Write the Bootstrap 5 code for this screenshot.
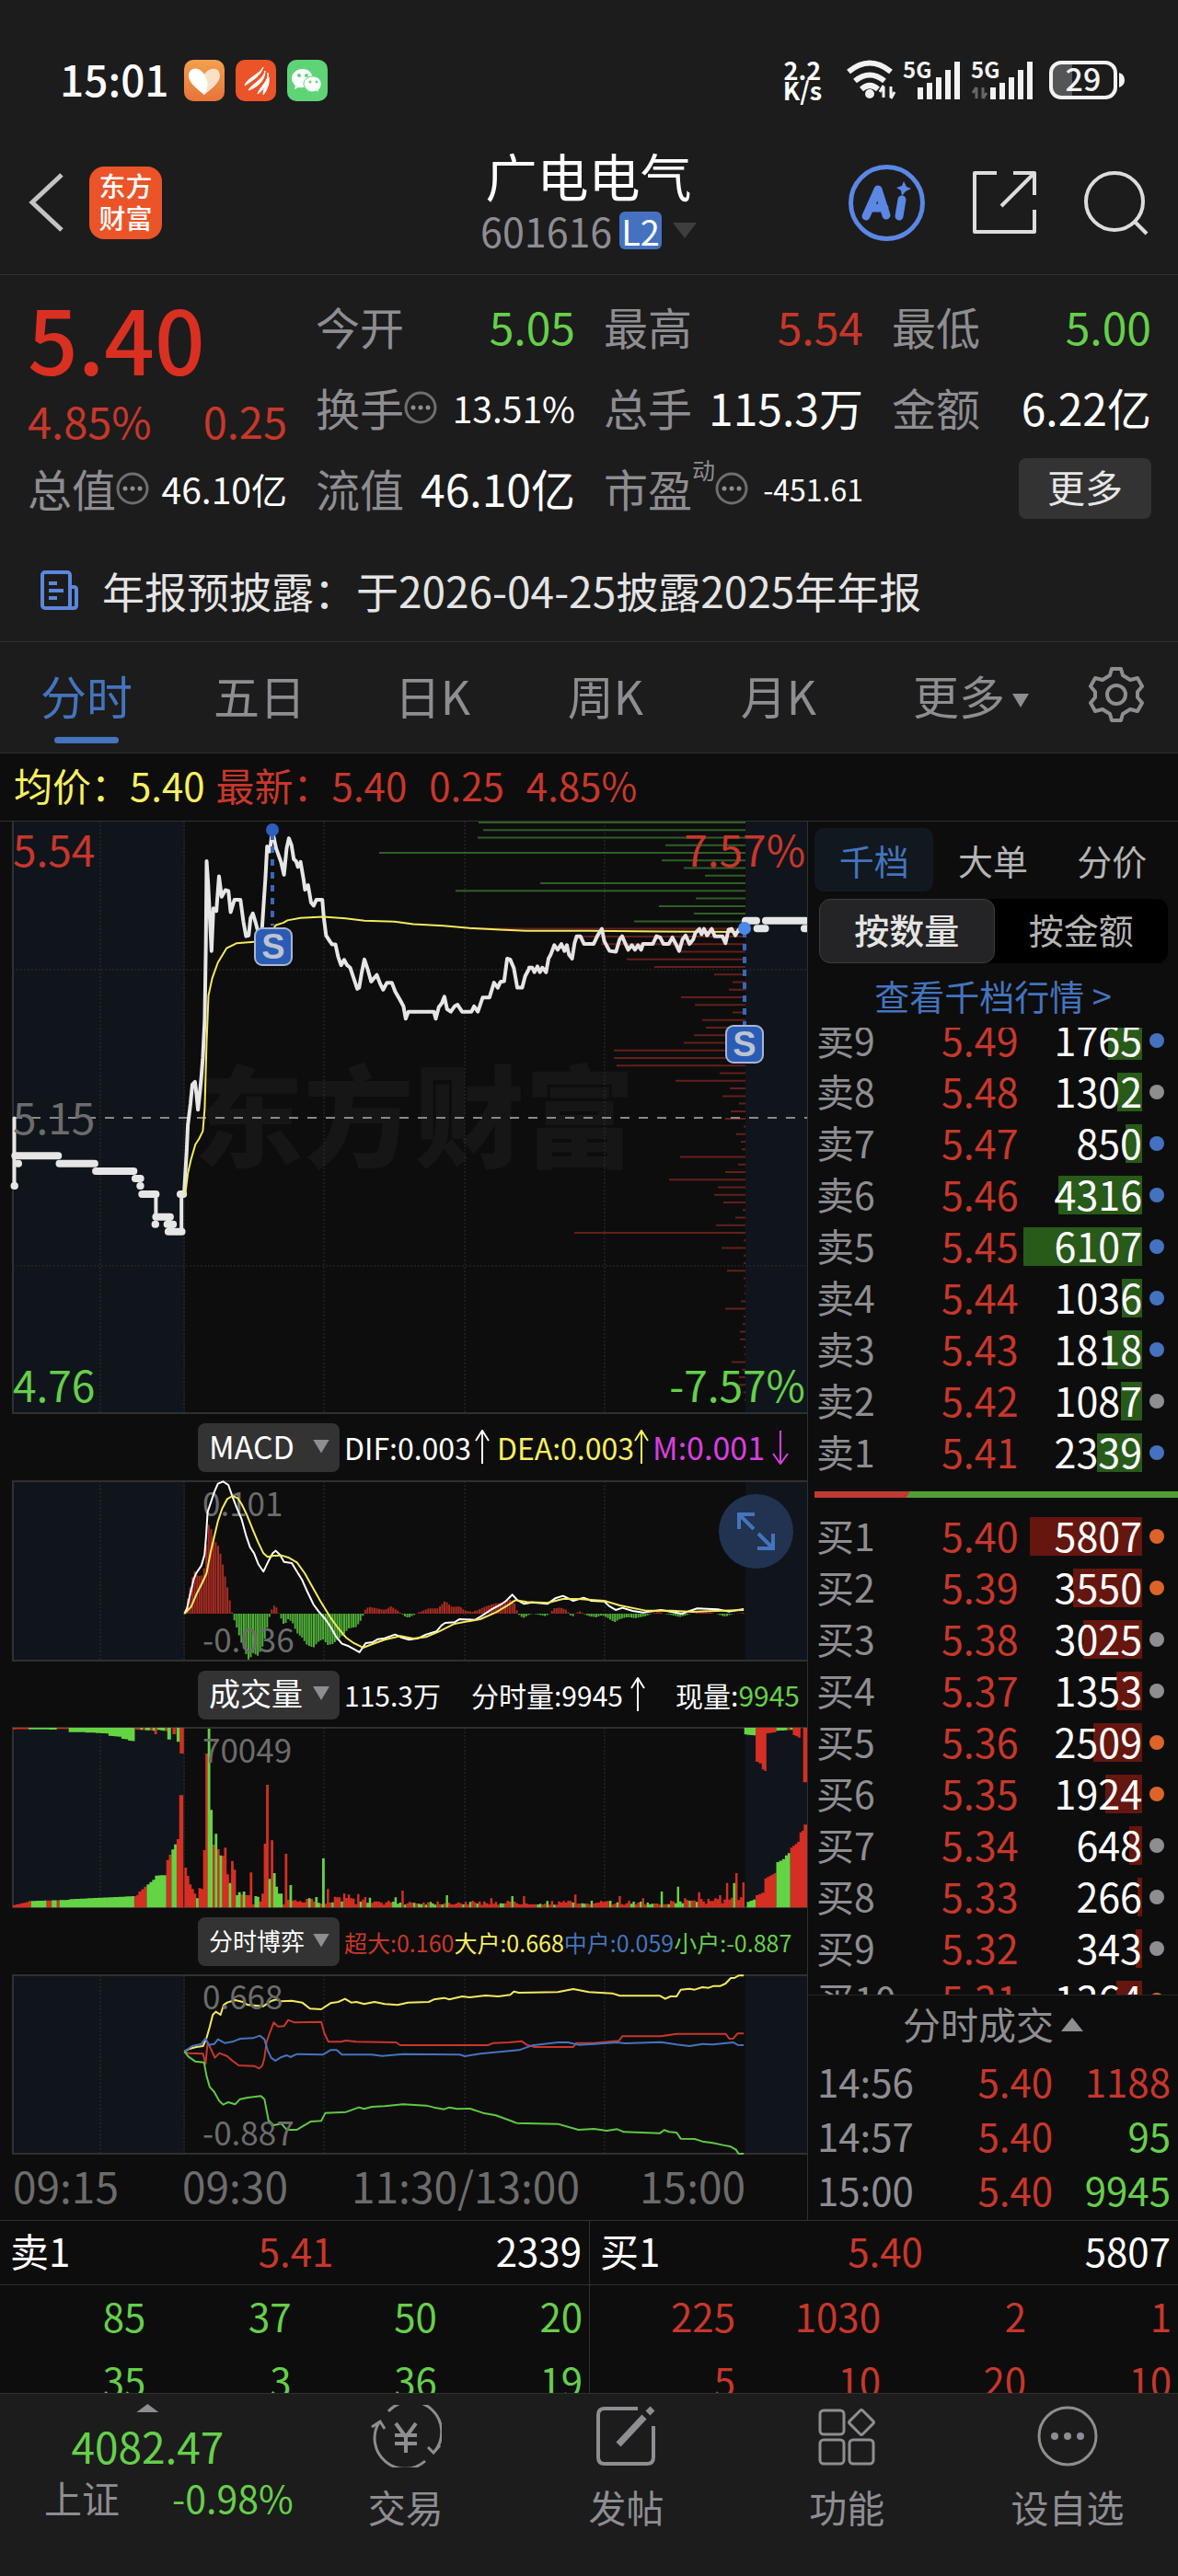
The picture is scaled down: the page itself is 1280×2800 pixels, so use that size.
<!DOCTYPE html>
<html lang="zh-CN" data-bs-theme="dark">
<head>
<meta charset="utf-8">
<meta name="viewport" content="width=device-width, initial-scale=1">
<title>广电电气 601616</title>
<link href="https://cdn.jsdelivr.net/npm/bootstrap@5.3.0/dist/css/bootstrap.min.css" rel="stylesheet">
<style>
:root{--up:#c8372b;--down:#66cf4b;--brand:#4474bd;--dim:#8e8d92;--line:#303030;--panel:#1c1c1c;--ink:#0d0d0d}
body{background:var(--ink);color:#fff;font-family:"Noto Sans CJK SC",sans-serif;font-size:42px;line-height:1.2}
button,a{font:inherit;color:inherit;line-height:inherit}
a{text-decoration:none}
svg{display:block;flex:none}
.up{color:var(--up)}.down{color:var(--down)}.dim{color:var(--dim)}.brand{color:var(--brand)}.gold{color:#f7ef62}.pink{color:#d83fe0}
.bare{background:none;border:0;padding:0}
.surface{background:var(--panel)}
.rule-b{border-bottom:1px solid var(--line)}
.rule-t{border-top:1px solid var(--line)}
.tri{display:inline-block;flex:none;width:18px;height:15px;background:currentColor;clip-path:polygon(0 0,100% 0,50% 100%)}
.tri-up{clip-path:polygon(50% 0,100% 100%,0 100%)}
/* status */
.statusbar{height:142px;padding:32px 58px 0 65px}
.clock{font-size:46px;line-height:50px;font-weight:500;padding-bottom:4px}
.rate{font-size:27px;line-height:22px;font-weight:700;text-align:center}
/* title */
.titlebar{height:157px;padding:0 32px 0 31px;display:grid;grid-template-columns:1fr auto 1fr;align-items:center}
.logo{width:79px;height:79px;border-radius:16px;background:#ea5428;font-size:29px;line-height:35px;font-weight:500;padding-bottom:3px;margin-left:28px;display:flex;align-items:center;text-align:center;justify-content:center}
.stock-name{font-size:56px;line-height:60px;font-weight:400}
.code{font-size:43px;line-height:44px}
.level{background:#4472c0;border-radius:6px;font-size:38px;line-height:41px;padding:0 2px;color:#fff}
.share{margin:0 51px}
/* quote */
.quote{padding:15px 29px 0 30px;display:grid;grid-template-columns:repeat(4,1fr);column-gap:31px}
.cell{height:88px;padding-bottom:6px;display:flex;align-items:center;justify-content:space-between;font-size:48px;white-space:nowrap}
.cell.low{height:80px}
.cell .s{font-size:39px}.cell .xs{font-size:32px}
.big{height:112px;font-size:96px;line-height:106px;font-weight:500;color:#d93022}
.chg{height:68px;padding-bottom:6px;font-size:47px;display:flex;align-items:center;justify-content:space-between}
.sup{font-size:25px;line-height:25px;align-self:flex-start;margin-top:8px}
.more{background:#333;border-radius:8px;font-size:41px;height:66px;width:144px;color:#e6e6e6;margin-left:auto;padding-bottom:4px}
.notice{height:120px;padding:8px 30px 0 44px;font-size:46px;gap:26px;color:#e4e4e4}
/* tabs */
.periods{height:121px;font-size:50px;padding-right:24px;color:var(--dim)}
.periods>*{flex:188 1 0;height:100%;padding-bottom:6px;text-align:center;position:relative}
.periods .wide{flex-grow:230}.periods .gear{flex-grow:86}
.periods .on{color:var(--brand)}
.periods .on::after{content:"";position:absolute;left:50%;bottom:10px;width:70px;height:7px;margin-left:-35px;border-radius:4px;background:var(--brand)}
.infoline{height:74px;padding:0 15px 4px;font-size:42px;white-space:pre}
/* body */
.board{display:grid;grid-template-columns:minmax(0,877fr) minmax(0,403fr)}
.board svg.plot{width:100%;height:auto}
.tools{height:71px;padding-left:215px;font-size:33px;white-space:nowrap;overflow:hidden}
.tools.t30{font-size:30px;height:70px}.tools.t25{font-size:25px}.t32{font-size:32px}.t34{font-size:34px}
.pick{width:154px;height:53px;background:#333;border-radius:8px;padding:0 11px 3px 12px;margin-right:5px;display:flex;align-items:center;justify-content:space-between;flex:none;font-size:34px}
.pick.tight{font-size:26px}
.expand{position:absolute;right:15px;top:15px;width:81px;height:81px;border-radius:50%;background:#213350;display:flex;align-items:center;justify-content:center}
/* book */
.book{border-left:1px solid var(--line)}
.btabs{padding:7px 7px 8px;font-size:38px;color:#b4b4b4}
.btabs button{flex:1;height:69px}
.btabs .on{background:#111820;border-radius:10px;color:var(--brand)}
.seg{margin:0 11px 0 12px;background:#000;border-radius:12px;font-size:38px;height:70px;color:#b4b4b4}
.seg button{flex:1;height:70px;padding-bottom:4px;border-radius:12px}
.seg .on{background:#242426;border:1px solid #3c3c3e;color:#e4e4e4;font-weight:500}
.morelink{height:70px;font-size:38px}
.asks{height:490px;overflow:hidden;display:flex;flex-direction:column;justify-content:flex-end}
.bids{height:526px;overflow:hidden}
.lv{height:56px;flex:none;display:grid;grid-template-columns:136px 1fr 16px;align-items:center;padding:0 15px 0 9px;font-size:43px;line-height:38px}
.lv .nm{font-size:41px;color:var(--dim);white-space:nowrap;padding-bottom:4px}
.lv .qty{position:relative;display:flex;justify-content:space-between;margin-right:8px;padding-bottom:4px}
.lv .qty b{font-weight:400;position:relative}
.lv .bar{position:absolute;right:0;top:0;height:42px;background:#285a1a}
.bids .bar{background:#65160f}
.pip{width:16px;height:16px;border-radius:50%;background:#8e8d92}
.pip.b{background:#4472c0}.pip.o{background:#dc6428}
.ratio{height:7px;margin:14px 7px;background:linear-gradient(120deg,#be3a32 25.5%,#4f9f35 25.5%)}
.trades{height:67px;font-size:41px;padding-bottom:4px;border-top:1px solid #252525}
.tick{height:59px;display:grid;grid-template-columns:1fr 1fr 1fr;align-items:center;padding:0 8px 4px 10px;font-size:42px}
.tick span:nth-child(n+2){text-align:right}
/* queue */
.queue{display:grid;grid-template-columns:1fr 1fr;height:188px;overflow:hidden}
.queue>div+div{border-left:1px solid var(--line)}
.q1{height:70px;display:grid;grid-template-columns:1fr 1fr 1fr;align-items:center;padding:0 8px 4px 11px}
.q2{height:70px;display:grid;grid-template-columns:repeat(4,1fr);align-items:center;text-align:right;padding:0 7px 4px 0}
/* dock */
.dock{height:199px;color:var(--dim);font-size:41px}
.dock>button{flex:240 1 0;padding-top:12px;display:flex;flex-direction:column;align-items:center;gap:18px}
.index{flex:321 1 0;white-space:nowrap}
.index .tri{width:24px;height:9px;margin:11px 0}
.index .last{font-size:46px;line-height:50px}
.index .pair{line-height:62px;padding:0 2px 0 48px;width:100%}
</style>
<script src="https://cdn.jsdelivr.net/npm/bootstrap@5.3.0/dist/js/bootstrap.bundle.min.js"></script>
</head>
<body>
<header class="surface">
<div class="statusbar d-flex align-items-center justify-content-between">
  <div class="d-flex align-items-center">
    <span class="clock me-3">15:01</span>
    <svg width="156" height="45" viewBox="0 0 156 45" role="img" aria-label="通知">
      <defs><linearGradient id="og" x1="0" y1="0" x2="0" y2="1"><stop offset="0" stop-color="#f2a04e"/><stop offset="1" stop-color="#e8733a"/></linearGradient></defs>
      <rect width="44" height="45" rx="10" fill="url(#og)"/><path d="M22 38C14 31 5 25 5 17c0-9 12-10 17-1 5-9 17-8 17 1 0 8-9 14-17 21z" fill="#fbe0c8"/><path d="M22 38C14 31 5 25 5 17c0-9 12-10 17-1 6 9 3 17 0 22z" fill="#fff"/>
      <rect x="56" width="44" height="45" rx="10" fill="#ea5428"/><path d="M86 8c-4 8-18 12-20 20 7-5 17-10 20-20zM88 12c-1 9-14 14-18 21 9-3 18-10 18-21zM91 14c2 8-9 16-11 23 6-4 13-13 11-23zM86 38c4-5 7-12 6-19-2 7-6 12-6 19z" fill="#fff" stroke="#fff"/>
      <rect x="112" width="44" height="45" rx="10" fill="#5fd477"/><path d="M129 10c-7 0-12 5-12 10 0 4 2 6 4 8l-1 4 4-2c8 1 15-3 16-10-1-6-5-10-11-10z" fill="#fff"/><path d="M140 18c-6 0-10 4-10 8s4 9 10 9l4-1 3 2-1-3c6-5 3-15-6-15z" fill="#fff" stroke="#5fd477"/><circle cx="125" cy="17" r="2" fill="#5fd477"/><circle cx="133" cy="17" r="2" fill="#5fd477"/><circle cx="137" cy="24" r="1.500" fill="#5fd477"/><circle cx="144" cy="24" r="1.500" fill="#5fd477"/>
    </svg>
  </div>
  <div class="d-flex align-items-center">
    <div class="rate me-4">2.2<br>K/s</div>
    <svg width="305" height="48" viewBox="914 62 305 48" fill="#f2f2f2" role="img" aria-label="Wi-Fi 5G 29%">
      <g fill="none" stroke="#f2f2f2" stroke-width="6"><path d="M919 77q23-19 46 0M926 87q16-13 32 0M933 96q9-8 18 0"/></g><circle cx="942" cy="101" r="5"/>
      <path d="M957 93v12M965 93v12M953 99l4-7M969 99l-4 7" stroke="#f2f2f2" stroke-width="3"/>
      <path d="M994 94h6v13h-6zM1004 89h6v18h-6zM1014 83h6v24h-6zM1024 75h6v32h-6zM1034 66h6v41h-6zM1073 94h6v13h-6zM1083 89h6v18h-6zM1093 83h6v24h-6zM1103 75h6v32h-6zM1113 66h6v41h-6z"/>
      <g font-size="24" font-weight="700"><text x="978" y="84">5G</text><text x="1052" y="84">5G</text></g>
      <path d="M1058 94v12M1065 94v12M1054 100l4-6M1069 100l-4 6" stroke="#666" stroke-width="3"/>
      <rect x="1139" y="67" width="70" height="38" rx="11" fill="#1c1c1c"/><path d="M1150 67h12v38h-12a11 11 0 0 1-11-11V78a11 11 0 0 1 11-11z" fill="#555"/><rect x="1139" y="67" width="70" height="38" rx="11" fill="none" stroke="#f2f2f2" stroke-width="4"/><path d="M1213 78q6 2 6 8t-6 8z"/>
      <text x="1174" y="98" font-size="34" font-weight="500" text-anchor="middle">29</text>
    </svg>
  </div>
</div>
<div class="titlebar rule-b">
  <div class="d-flex align-items-center">
    <button class="bare" aria-label="返回"><svg width="38" height="64" fill="none" stroke="#c4c4c4" stroke-width="5"><path d="M36 2L4 32l32 30"/></svg></button>
    <div class="logo">东方<br>财富</div>
  </div>
  <div class="text-center mb-2">
    <h1 class="stock-name m-0">广电电气</h1>
    <div class="d-flex align-items-center justify-content-center code dim mt-2"><span class="me-2">601616</span><span class="level me-2">L2</span><svg class="ms-1" width="26" height="17" fill="#3e3e3e"><path d="M0 0h26L13 17z"/></svg></div>
  </div>
  <div class="d-flex align-items-center justify-content-end">
    <button class="bare" aria-label="AI"><svg width="85" height="85" viewBox="0 0 85 85" fill="none" stroke="#5b87e5"><circle cx="42.500" cy="42.500" r="39" stroke-width="5"/><path d="M20 57L33 28l9 28M25 48h15M59 39l-3 18" stroke-width="9" stroke-linecap="round" stroke-linejoin="round"/><path d="M61 19l3 6 5 2-6 3-4 5-1-6-5-3 6-2z" fill="#5b87e5" stroke="none"/></svg></button>
    <button class="bare share" aria-label="分享"><svg width="69" height="69" fill="none" stroke="#dcdcdc" stroke-width="4" stroke-linejoin="round"><path d="M26 2H2v64h65V42M44 2h23v24M66 3L31 38"/></svg></button>
    <button class="bare" aria-label="搜索"><svg width="71" height="71" fill="none" stroke="#dcdcdc" stroke-width="4"><circle cx="34" cy="34" r="31"/><path d="M56 56l13 13"/></svg></button>
  </div>
</div>
<section class="quote">
  <div><div class="big">5.40</div><div class="chg up"><span>4.85%</span><span>0.25</span></div><div class="cell low"><span class="dim d-flex align-items-center">总值<svg width="36" height="36"><use href="#dots"/></svg></span><span class="s">46.10亿</span></div></div>
  <div><div class="cell"><span class="dim">今开</span><span class="down">5.05</span></div><div class="cell"><span class="dim d-flex align-items-center">换手<svg width="36" height="36"><use href="#dots"/></svg></span><span class="s">13.51%</span></div><div class="cell"><span class="dim">流值</span><span>46.10亿</span></div></div>
  <div><div class="cell"><span class="dim">最高</span><span class="up">5.54</span></div><div class="cell"><span class="dim">总手</span><span>115.3万</span></div><div class="cell"><span class="dim d-flex align-items-center h-100">市盈<span class="sup">动</span><svg width="36" height="36"><use href="#dots"/></svg></span><span class="xs">-451.61</span></div></div>
  <div><div class="cell"><span class="dim">最低</span><span class="down">5.00</span></div><div class="cell"><span class="dim">金额</span><span>6.22亿</span></div><div class="cell"><button class="bare more">更多</button></div></div>
</section>
<a href="#" class="notice rule-b d-flex align-items-center"><svg width="41" height="43" fill="none" stroke="#5b87dd" stroke-width="4"><rect x="2" y="2" width="30" height="39" rx="3"/><path d="M32 18h4q3 0 3 3v17q0 3-3 3h-6M9 14h9M9 22h16M9 30h9"/></svg><span>年报预披露：于2026-04-25披露2025年年报</span></a>
<nav class="periods rule-b d-flex align-items-center">
  <button class="bare on">分时</button><button class="bare">五日</button><button class="bare">日K</button><button class="bare">周K</button><button class="bare">月K</button>
  <button class="bare wide">更多<span class="tri ms-2 mb-2"></span></button>
  <button class="bare gear d-flex align-items-center justify-content-center" aria-label="设置"><svg width="60" height="60" viewBox="0 0 60 60" fill="none" stroke="#8e8d92" stroke-width="4" stroke-linejoin="round"><path d="M25 2h10l2 7 8 5 8-2 5 9-5 6v6l5 6-5 9-8-2-8 5-2 7H25l-2-7-8-5-8 2-5-9 5-6v-6l-5-6 5-9 8 2 8-5z"/><circle cx="30" cy="30" r="10"/></svg></button>
</nav>
</header>
<div class="infoline rule-b d-flex align-items-center"><span class="gold me-2">均价：5.40</span><span class="up ms-1">最新：5.40</span><span class="up ms-4">0.25</span><span class="up ms-4">4.85%</span></div>
<main class="board">
<div>
<svg class="plot" viewBox="0 893 877 645" role="img" aria-label="分时走势">
  <path d="M14 893h187v643H14zM810 893h67v643h-67z" fill="#10151c"/>
  <text x="210" y="1260" font-size="120" font-weight="900" fill="#161616">东方财富</text>
  <path class="grid" d="M109 893v643M200 893v643M352 893v643M505 893v643M657 893v643M14 1054h863M14 1376h863" stroke="#2e2e2e" stroke-dasharray="2 2" fill="none"/>
  <path d="M14 893v643h863" stroke="#303030" stroke-width="2" fill="none"/>
  <path id="chipG" stroke="#2f5f28" stroke-width="2"/><path id="chipR" stroke="#64201b" stroke-width="2"/>
  <path d="M14 1215h863" stroke="#8a8a8a" stroke-width="2" stroke-dasharray="10 10"/>
  <g fill="none" stroke-linejoin="round" stroke-linecap="round">
    <g transform="translate(0 880) scale(.4082 .4209)">
      <path vector-effect="non-scaling-stroke" stroke="#e6e6e6" stroke-width="4" d="M38 797V972M415 993V1052M483 1090V993"/>
      <path vector-effect="non-scaling-stroke" stroke="#e6e6e6" stroke-width="8" d="M38 972h1M40 894H155M48 914h1M158 914H252M255 934H356M360 953H374M373 972h1M378 993H415M415 1052H453M413 1071h1M445 1071H461M448 1090H484M480 993H488"/>
      <path vector-effect="non-scaling-stroke" stroke="#e6e6e6" stroke-width="4" d="M490 993 497 880 500 815 507 760 512 710 519 703 523 735 527 775 531 740 536 690 540 640 545 540 548 350 550 133 554 190 563 365 568 255 576 262 583 172 590 225 600 208 608 210 614 265 624 233 640 233 648 290 655 327 662 325 667 280 673 268 680 290 690 327 697 315 707 170 711 95 718 108 725 55 735 100 748 135 756 168 763 100 769 74 776 92 782 128 788 133 793 148 800 135 808 180 812 207 820 195 828 240 835 248 842 233 858 233 862 280 868 325 878 340 884 348 893 348 900 380 908 402 916 388 924 402 932 408 943 440 951 463 956 460 963 420 970 387 978 410 988 444 1003 427 1012 450 1020 465 1030 447 1043 447 1052 470 1064 490 1074 508 1080 540 1087 522 1155 522 1160 540 1168 510 1176 500 1183 483 1190 515 1200 522 1210 508 1218 504 1230 522 1255 522 1262 508 1272 522 1285 485 1303 485 1315 447 1325 460 1332 445 1342 443 1350 385 1358 387 1368 410 1377 460 1390 460 1398 430 1410 408"/>
      <path vector-effect="non-scaling-stroke" stroke="#f3e95e" stroke-width="2" d="M493 995 500 940 508 905 520 865 530 850 540 830 545 770 550 600 555 480 565 435 580 395 603 358 630 345 700 340 712 325 735 298 755 292 765 286 800 280 860 277 920 281 970 287 1050 289 1100 296 1180 300 1250 306 1330 310 1400 313 1568 313 1760 315 1984 316"/>
    </g>
    <g transform="translate(440 880) scale(.3333 .4209)">
      <path vector-effect="non-scaling-stroke" stroke="#e8e2e2" stroke-width="4" d="M405 408 415 408 422 420 432 405 440 420 448 408 460 420 468 385 475 375 487 350 498 362 510 347 520 365 528 350 535 375 545 385 553 345 560 327 572 327 584 347 615 347 628 325 642 308 650 340 667 365 688 367 700 335 708 327 718 345 728 362 740 350 750 362 760 350 770 362 776 347 808 347 820 327 832 330 843 347 860 347 872 330 885 350 894 365 905 335 915 325 928 347 940 335 947 318 960 308 967 322 975 308 985 325 1000 308 1010 327 1035 327 1045 345 1055 310 1065 308 1077 325 1088 310 1107 307"/>
      <path vector-effect="non-scaling-stroke" stroke="#e6e6e6" stroke-width="8" d="M1110 287H1146M1148 307H1175M1176 287H1308M1302 307h8"/>
    </g>
    <path d="M296 906v100M809 1012v102" stroke="#3a66bb" stroke-width="4" stroke-dasharray="7 7" stroke-linecap="butt"/>
  </g>
  <circle cx="296" cy="902" r="7" fill="#2c5fc0"/><circle cx="809" cy="1009" r="7" fill="#4c87ea"/>
  <g fill="#2b5cb5" stroke="#a9b7d3" stroke-width="2"><rect x="277" y="1009" width="40" height="40" rx="8"/><rect x="789" y="1115" width="40" height="40" rx="8"/></g>
  <g font-size="38" font-weight="700" fill="#bcc3d3" text-anchor="middle" font-family="Liberation Sans, sans-serif"><text x="297" y="1042">S</text><text x="809" y="1148">S</text></g>
  <g font-size="46"><text x="14" y="942" fill="#c8372b">5.54</text><text x="14" y="1233" fill="#6c6c6c">5.15</text><text x="14" y="1524" fill="#66cf4b">4.76</text><g text-anchor="end"><text x="875" y="942" fill="#c8372b">7.57%</text><text x="875" y="1524" fill="#66cf4b">-7.57%</text></g></g>
</svg>
<div class="tools d-flex align-items-center">
  <button class="bare pick">MACD<span class="tri dim"></span></button>
  <span class="d-flex align-items-center t32">DIF:0.003<svg class="ms-1" width="16" height="38" stroke="#fff" stroke-width="2" fill="none"><path d="M8 37V1M1 12L8 1l7 11"/></svg></span>
  <span class="d-flex align-items-center gold ms-2 t32">DEA:0.003<svg width="16" height="38" stroke="#f7ef62" stroke-width="2" fill="none"><path d="M8 37V1M1 12L8 1l7 11"/></svg></span>
  <span class="d-flex align-items-center pink ms-1 t34">M:0.001<svg class="ms-2" width="18" height="38" stroke="#d83fe0" stroke-width="2" fill="none"><path d="M9 1v36M1 26l8 11 8-11"/></svg></span>
</div>
<div class="position-relative">
<svg class="plot" viewBox="0 1609 877 198" role="img" aria-label="MACD">
  <path d="M14 1610h187v195H14zM810 1610h67v195h-67z" fill="#10151c"/>
  <path d="M109 1610v195M200 1610v195M352 1610v195M505 1610v195M657 1610v195" stroke="#2e2e2e" stroke-dasharray="2 2"/><path d="M877 1610H14v195h863" stroke="#303030" stroke-width="2" fill="none"/>
  <path id="macdR" stroke="#a82c22" stroke-width="2"/><path id="macdG" stroke="#4fae38" stroke-width="2"/>
  <g font-size="35" fill="#6c6c6c"><text x="220" y="1648">0.101</text><text x="220" y="1796">-0.036</text></g>
  <g transform="translate(0 1530) scale(.5612 .3333)" fill="none" stroke-width="2" stroke-linejoin="round">
    <path vector-effect="non-scaling-stroke" stroke="#fff" d="M357 672 362 655 368 610 375 560 380 540 390 515 396 480 399 420 402 340 408 310 415 275 422 248 432 241 442 252 450 290 458 325 468 365 476 415 484 455 492 475 500 510 510 535 520 500 528 475 534 467 542 480 550 503 565 507 575 535 585 562 595 600 607 642 617 665 630 690 640 715 650 745 662 770 675 778 688 790 696 798 708 768 722 765 732 755 745 752 765 740 778 750 792 757 810 752 825 740 845 730 855 710 862 702 880 700 890 690 920 692 930 682 950 660 970 642 980 630 992 610 1002 628 1015 640 1030 635 1060 640 1075 622 1090 614 1110 630 1130 620 1145 630 1170 632 1180 648 1192 660 1205 653 1225 663 1245 668 1280 660 1320 672 1350 655 1390 658 1410 665 1440 657"/>
    <path vector-effect="non-scaling-stroke" stroke="#f3e95e" d="M357 672 370 650 380 610 392 570 400 540 408 470 415 420 422 370 430 330 440 298 450 288 460 295 468 315 478 350 490 400 500 440 510 475 518 487 530 483 545 482 560 490 575 505 590 540 605 585 620 630 640 685 655 720 670 750 685 768 703 783 720 772 745 757 775 745 800 753 825 748 850 730 880 705 930 690 960 668 980 648 998 628 1020 634 1060 637 1090 624 1120 624 1170 630 1200 645 1250 662 1300 662 1340 666 1400 662 1440 660"/>
  </g>
</svg>
<button class="bare expand" aria-label="全屏"><svg width="41" height="41" fill="none" stroke="#4474bd" stroke-width="4"><path d="M2 18V2h17M2 2l16 16M39 23v16H22M39 39L23 23"/></svg></button>
</div>
<div class="tools t30 d-flex align-items-center">
  <button class="bare pick">成交量<span class="tri dim"></span></button>
  <span>115.3万</span><span class="d-flex align-items-center ms-auto">分时量:9945<svg class="ms-2" width="16" height="38" stroke="#fff" stroke-width="2" fill="none"><path d="M8 37V1M1 12L8 1l7 11"/></svg></span><span class="ms-auto me-2">现量:<span class="down">9945</span></span>
</div>
<svg class="plot" viewBox="0 1877 877 198" role="img" aria-label="成交量">
  <path d="M14 1878h187v195H14zM810 1878h67v195h-67z" fill="#10151c"/>
  <path d="M109 1878v195M200 1878v195M352 1878v195M505 1878v195M657 1878v195" stroke="#2e2e2e" stroke-dasharray="2 2"/><path d="M877 1878H14v195h863" stroke="#303030" stroke-width="2" fill="none"/>
  <g transform="translate(0 1800) scale(.5612 .3333)"><path id="volR" fill="#d42f22"/><path id="volG" fill="#64d444"/></g>
  <text x="220" y="1916" font-size="35" fill="#6c6c6c">70049</text>
</svg>
<div class="tools t25 d-flex align-items-center">
  <button class="bare pick tight">分时博弈<span class="tri dim"></span></button>
  <span class="up">超大:0.160</span><span class="gold">大户:0.668</span><span class="brand">中户:0.059</span><span class="down">小户:-0.887</span>
</div>
<svg class="plot" viewBox="0 2146 877 267" role="img" aria-label="分时博弈">
  <path d="M14 2147h187v194H14zM810 2147h67v194h-67z" fill="#10151c"/>
  <path d="M109 2147v194M200 2147v194M352 2147v194M505 2147v194M657 2147v194" stroke="#2e2e2e" stroke-dasharray="2 2"/><path d="M877 2147H14v194h863" stroke="#303030" stroke-width="2" fill="none"/>
  <g transform="translate(0 2070) scale(.5612 .3333)" fill="none" stroke-width="2" stroke-linejoin="round">
    <path vector-effect="non-scaling-stroke" stroke="#f3e95e" d="M357 480 365 472 380 465 393 462 400 435 406 400 412 360 418 350 427 360 433 328 440 320 455 312 470 318 480 328 510 332 525 315 535 310 545 316 565 314 585 320 600 340 622 342 640 322 655 318 668 308 680 320 690 318 705 325 725 318 745 325 770 328 790 320 830 318 840 310 860 305 870 310 895 300 910 303 940 297 965 300 988 295 995 284 1005 288 1080 286 1110 276 1140 286 1185 290 1200 298 1278 298 1288 308 1298 300 1310 300 1318 278 1335 275 1345 278 1360 270 1372 272 1382 266 1395 266 1405 258 1415 240 1422 240 1430 232 1440 232"/>
    <path vector-effect="non-scaling-stroke" stroke="#c8372b" d="M357 480 365 485 393 487 398 520 402 450 408 470 416 500 425 485 440 495 450 510 462 525 492 527 502 535 508 525 512 500 516 450 522 420 530 385 538 398 550 397 558 377 570 385 622 383 628 420 636 448 660 448 670 444 690 448 767 450 775 459 945 459 955 452 985 450 1010 446 1020 458 1035 465 1110 465 1116 452 1150 452 1198 445 1205 430 1280 430 1310 422 1405 422 1412 438 1420 437 1428 421 1440 421"/>
    <path vector-effect="non-scaling-stroke" stroke="#4474bd" d="M357 480 372 462 390 455 398 437 404 458 415 455 422 440 435 452 450 448 465 438 490 436 503 428 512 440 518 475 525 500 533 510 545 498 555 492 562 498 575 488 625 490 640 475 652 475 662 490 720 490 740 494 780 488 890 490 900 495 930 487 1005 475 1030 460 1080 450 1100 450 1120 458 1150 455 1195 450 1210 453 1280 449 1310 457 1335 462 1360 455 1380 457 1420 450 1428 458 1440 459"/>
    <path vector-effect="non-scaling-stroke" stroke="#5fc845" d="M357 480 365 497 378 512 395 515 400 560 406 595 415 612 424 640 432 653 442 645 455 652 465 635 480 630 505 625 512 635 516 670 520 705 530 720 545 715 555 735 575 735 590 720 602 708 622 706 630 680 670 677 695 662 705 667 720 660 745 658 780 652 825 656 840 662 860 668 870 662 885 667 910 666 935 680 960 688 988 705 1000 713 1080 716 1120 735 1150 732 1175 738 1195 733 1208 742 1278 746 1286 736 1296 742 1310 744 1318 764 1345 765 1360 773 1380 778 1400 785 1415 790 1425 800 1430 813 1440 813"/>
  </g>
  <g font-size="35" fill="#6c6c6c"><text x="220" y="2184">0.668</text><text x="220" y="2332">-0.887</text></g>
  <g font-size="46" fill="#6c6c6c"><text x="14" y="2395">09:15</text><text x="198" y="2395">09:30</text><text x="506" y="2395" text-anchor="middle">11:30/13:00</text><text x="810" y="2395" text-anchor="end">15:00</text></g>
</svg>
</div>
<aside class="book">
  <div class="btabs d-flex"><button class="bare on">千档</button><button class="bare">大单</button><button class="bare">分价</button></div>
  <div class="seg d-flex"><button class="bare on">按数量</button><button class="bare">按金额</button></div>
  <a href="#" class="morelink brand d-flex align-items-center justify-content-center">查看千档行情 &gt;</a>
  <div class="asks">
    <div class="lv"><span class="nm">卖9</span><span class="qty"><i class="bar" style="width:37px"></i><b class="up">5.49</b><b>1765</b></span><i class="pip b"></i></div>
    <div class="lv"><span class="nm">卖8</span><span class="qty"><i class="bar" style="width:27px"></i><b class="up">5.48</b><b>1302</b></span><i class="pip"></i></div>
    <div class="lv"><span class="nm">卖7</span><span class="qty"><i class="bar" style="width:18px"></i><b class="up">5.47</b><b>850</b></span><i class="pip b"></i></div>
    <div class="lv"><span class="nm">卖6</span><span class="qty"><i class="bar" style="width:91px"></i><b class="up">5.46</b><b>4316</b></span><i class="pip b"></i></div>
    <div class="lv"><span class="nm">卖5</span><span class="qty"><i class="bar" style="width:129px"></i><b class="up">5.45</b><b>6107</b></span><i class="pip b"></i></div>
    <div class="lv"><span class="nm">卖4</span><span class="qty"><i class="bar" style="width:22px"></i><b class="up">5.44</b><b>1036</b></span><i class="pip b"></i></div>
    <div class="lv"><span class="nm">卖3</span><span class="qty"><i class="bar" style="width:38px"></i><b class="up">5.43</b><b>1818</b></span><i class="pip b"></i></div>
    <div class="lv"><span class="nm">卖2</span><span class="qty"><i class="bar" style="width:23px"></i><b class="up">5.42</b><b>1087</b></span><i class="pip"></i></div>
    <div class="lv"><span class="nm">卖1</span><span class="qty"><i class="bar" style="width:49px"></i><b class="up">5.41</b><b>2339</b></span><i class="pip b"></i></div>
  </div>
  <div class="ratio"></div>
  <div class="bids">
    <div class="lv"><span class="nm">买1</span><span class="qty"><i class="bar" style="width:122px"></i><b class="up">5.40</b><b>5807</b></span><i class="pip o"></i></div>
    <div class="lv"><span class="nm">买2</span><span class="qty"><i class="bar" style="width:75px"></i><b class="up">5.39</b><b>3550</b></span><i class="pip o"></i></div>
    <div class="lv"><span class="nm">买3</span><span class="qty"><i class="bar" style="width:64px"></i><b class="up">5.38</b><b>3025</b></span><i class="pip"></i></div>
    <div class="lv"><span class="nm">买4</span><span class="qty"><i class="bar" style="width:28px"></i><b class="up">5.37</b><b>1353</b></span><i class="pip"></i></div>
    <div class="lv"><span class="nm">买5</span><span class="qty"><i class="bar" style="width:53px"></i><b class="up">5.36</b><b>2509</b></span><i class="pip o"></i></div>
    <div class="lv"><span class="nm">买6</span><span class="qty"><i class="bar" style="width:40px"></i><b class="up">5.35</b><b>1924</b></span><i class="pip o"></i></div>
    <div class="lv"><span class="nm">买7</span><span class="qty"><i class="bar" style="width:14px"></i><b class="up">5.34</b><b>648</b></span><i class="pip"></i></div>
    <div class="lv"><span class="nm">买8</span><span class="qty"><i class="bar" style="width:5px"></i><b class="up">5.33</b><b>266</b></span><i class="pip"></i></div>
    <div class="lv"><span class="nm">买9</span><span class="qty"><i class="bar" style="width:7px"></i><b class="up">5.32</b><b>343</b></span><i class="pip"></i></div>
    <div class="lv"><span class="nm">买10</span><span class="qty"><i class="bar" style="width:28px"></i><b class="up">5.31</b><b>1364</b></span><i class="pip o"></i></div>
  </div>
  <button class="bare trades dim w-100 d-flex align-items-center justify-content-center">分时成交<svg class="ms-2" width="24" height="15" fill="currentColor"><path d="M0 15h24L12 0z"/></svg></button>
  <div class="tick"><span class="dim">14:56</span><span class="up">5.40</span><span class="up">1188</span></div>
  <div class="tick"><span class="dim">14:57</span><span class="up">5.40</span><span class="down">95</span></div>
  <div class="tick"><span class="dim">15:00</span><span class="up">5.40</span><span class="down">9945</span></div>
</aside>
</main>
<section class="queue rule-t">
  <div><div class="q1 rule-b"><span>卖1</span><span class="up text-center">5.41</span><span class="text-end">2339</span></div>
    <div class="q2 down"><span>85</span><span>37</span><span>50</span><span>20</span></div><div class="q2 down"><span>35</span><span>3</span><span>36</span><span>19</span></div></div>
  <div><div class="q1 rule-b"><span>买1</span><span class="up text-center">5.40</span><span class="text-end">5807</span></div>
    <div class="q2 up"><span>225</span><span>1030</span><span>2</span><span>1</span></div><div class="q2 up"><span>5</span><span>10</span><span>20</span><span>10</span></div></div>
</section>
<footer class="dock surface rule-t d-flex">
  <a href="#" class="index d-flex flex-column align-items-center"><span class="tri tri-up dim"></span><span class="down last">4082.47</span><span class="pair d-flex justify-content-between"><span>上证</span><span class="down">-0.98%</span></span></a>
  <button class="bare"><svg width="78" height="68" viewBox="0 0 78 68" fill="none" stroke="#8e8d92" stroke-width="3"><path d="M20 7a33 33 0 0 1 49 45M60 61A33 33 0 0 1 10 19M2 24l9-6 5 8M76 44l-7 8-6-6"/><path d="M28 20l11 15 11-15M39 35v17M27 33h24M27 42h24" stroke-width="4"/></svg>交易</button>
  <button class="bare"><svg width="66" height="68" viewBox="0 0 66 68" fill="none" stroke="#8e8d92" stroke-width="4"><path d="M46 4H10Q3 4 3 11v46q0 7 7 7h46q7 0 7-7V23"/><path d="M25 43L53 13M57 9l5-5" stroke-width="7"/></svg>发帖</button>
  <button class="bare"><svg width="64" height="68" viewBox="0 0 64 68" fill="none" stroke="#8e8d92" stroke-width="3"><rect x="3" y="6" width="26" height="26" rx="4"/><rect x="3" y="38" width="26" height="26" rx="4"/><rect x="35" y="38" width="26" height="26" rx="4"/><rect x="38" y="9" width="20" height="20" rx="2" transform="rotate(45 48 19)"/></svg>功能</button>
  <button class="bare"><svg width="68" height="68" viewBox="0 0 68 68" fill="#8e8d92"><circle cx="34" cy="34" r="31" fill="none" stroke="#8e8d92" stroke-width="3"/><circle cx="20" cy="34" r="4"/><circle cx="34" cy="34" r="4"/><circle cx="48" cy="34" r="4"/></svg>设自选</button>
</footer>
<svg width="0" height="0" class="position-absolute"><symbol id="dots" viewBox="0 0 36 36"><circle cx="18" cy="18" r="16" fill="none" stroke="#6e6e72" stroke-width="3"/><circle cx="10" cy="18" r="2.500" fill="#8e8d92"/><circle cx="18" cy="18" r="2.500" fill="#8e8d92"/><circle cx="26" cy="18" r="2.500" fill="#8e8d92"/></symbol></svg>
<script>
const put = (id, d) => document.getElementById(id).setAttribute('d', d);
// chips distribution: bar length per price level
const chipsUp = [290,285,291,87,398,91,67,44,223,315,54,94,56,121];
const chipsDown = [300,183,157,70,129,99,34,14,18,70,55,14,47,43,56,67,143,143,140,28,76,17,25,7,16,22,2,10,5,4,71,8,22,83,30,34,24,3,11,32,186,2,26,2,2,20,2,1,1,5,22,2,3,6,6,2,1,15,4,7,7,2,1,0,0,1];
const chips = (a, k) => a.map((w, i) => w ? `M810 ${(894 + (i + k) * 8.26).toFixed(1)}h-${w}` : '').join('');
put('chipG', chips(chipsUp, 0)); put('chipR', chips(chipsDown, 14));
// MACD histogram envelope
const env = [[358,672],[364,620],[370,570],[376,530],[382,548],[390,550],[396,520],[400,440],[405,372],[410,405],[418,440],[424,455],[430,500],[437,560],[442,600],[447,650],[450,672],[455,700],[460,725],[466,760],[474,795],[482,825],[490,800],[500,810],[508,780],[515,740],[520,690],[524,672],[528,648],[532,645],[537,655],[540,672],[545,690],[550,710],[558,690],[566,700],[575,735],[585,750],[595,775],[607,783],[615,765],[625,755],[635,775],[645,770],[655,755],[665,740],[675,720],[690,715],[700,690],[704,672],[708,655],[715,650],[730,655],[745,660],[757,648],[770,662],[778,672],[783,680],[790,685],[800,678],[805,672],[815,665],[830,655],[848,655],[862,630],[875,650],[890,648],[900,662],[915,666],[925,660],[940,648],[960,638],[975,635],[990,625],[997,640],[1003,672],[1008,680],[1013,687],[1022,678],[1030,672],[1045,676],[1055,680],[1065,672],[1072,655],[1085,652],[1097,660],[1102,672],[1108,683],[1113,672],[1123,664],[1130,672],[1140,680],[1155,684],[1165,677],[1175,684],[1190,700],[1200,690],[1215,683],[1230,687],[1250,680],[1262,672],[1275,665],[1285,672],[1300,676],[1316,683],[1330,676],[1345,670],[1360,664],[1375,668],[1390,674],[1405,682],[1415,674],[1441,669]];
let r = '', g = '', j = 0;
for (let x = 359; x < 1441; x += 4.52) {
  while (env[j + 1][0] < x) j++;
  const [a, b] = [env[j], env[j + 1]], v = a[1] + (b[1] - a[1]) * (x - a[0]) / (b[0] - a[0]);
  const s = `M${(x * .5612).toFixed(1)} 1754V${(1530 + v / 3).toFixed(1)}`;
  v < 672 ? r += s : g += s;
}
put('macdR', r); put('macdG', g);
// volume
let R = '', G = '', seed = 7;
const rnd = () => (seed = seed * 16807 % 2147483647) / 2147483647;
const bar = (x, w, y0, y1, c) => { const s = `M${x} ${y0}h${w}V${y1}h-${w}z`; c ? R += s : G += s; };
const step = (list, lo) => list.forEach(([x0, x1, t0, t1, mix]) => {
  const n = Math.max(1, Math.round((x1 - x0) / 5)), w = (x1 - x0) / n;
  for (let i = 0; i < n; i++) bar(x0 + i * w, w, lo, t0 + (t1 - t0) * i / n, rnd() < mix);
});
step([[25,55,812,801,1],[55,135,799,795,.4],[135,260,793,783,0],[260,268,783,775,1],[268,300,768,722,.4],[300,322,716,714,0],[322,347,665,580,.5],[347,355,454,454,1],[1446,1463,802,790,0],[1463,1480,780,768,1],[1480,1503,725,704,1],[1503,1520,672,658,0],[1520,1530,650,635,.5],[1530,1548,625,600,1],[1548,1556,575,565,.4],[1556,1563,550,550,1]], 820);
step([[25,55,239,238,1],[55,110,239,240,0],[110,133,238,238,1],[133,165,248,248,0],[165,185,250,250,0],[185,210,251,253,0],[210,235,260,264,0],[235,248,270,272,0],[248,261,276,278,0],[262,300,240,244,.5],[299,304,255,255,1],[304,325,241,246,.5],[324,331,272,272,0],[334,341,255,255,1],[342,348,280,280,0],[348,356,318,318,1],[1441,1463,256,260,0],[1463,1475,345,355,1],[1475,1484,370,380,1],[1484,1503,252,248,1],[1503,1535,244,240,.2],[1535,1550,258,270,1],[1555,1563,412,412,1]], 234);
const fixed = {0:[690,1],1:[717,1],2:[745,1],3:[760,1],4:[775,1],5:[790,0],6:[757,1],7:[760,1],8:[633,1],9:[318,1],10:[237,0],11:[502,0],12:[615,1],13:[580,0],14:[630,1],15:[650,0],16:[652,1],17:[625,1],18:[712,1],19:[740,0],20:[668,1],21:[697,1],22:[780,0],23:[770,0],24:[778,1],25:[768,0],26:[780,1],27:[780,1],28:[706,1],29:[810,1],30:[783,0],31:[785,0],32:[800,1],33:[775,1],34:[612,1],35:[420,1],36:[727,0],37:[601,1],38:[708,0],39:[752,0],40:[775,0],41:[775,0],42:[810,1],43:[645,1],44:[795,1],45:[747,0],59:[660,0],61:[760,1],68:[775,1],70:[778,1],74:[776,1],90:[787,0],93:[765,1],112:[780,0],131:[790,1],140:[783,0],145:[783,1],167:[778,1],186:[783,1],196:[790,1],204:[768,0],211:[752,0],220:[770,1],229:[780,1],232:[740,1],235:[740,0],236:[708,1],239:[738,1]};
for (let i = 0; i < 240; i++) {
  const busy = i < 80 || i > 210, f = fixed[i] || [(busy ? 785 : 798) + Math.floor(rnd() * (busy ? 25 : 14)), rnd() < .72];
  bar((357 + i * 4.52).toFixed(1), i < 60 ? 5 : 4.4, 820, f[0], f[1]);
}
put('volR', R); put('volG', G);
</script>
</body>
</html>
